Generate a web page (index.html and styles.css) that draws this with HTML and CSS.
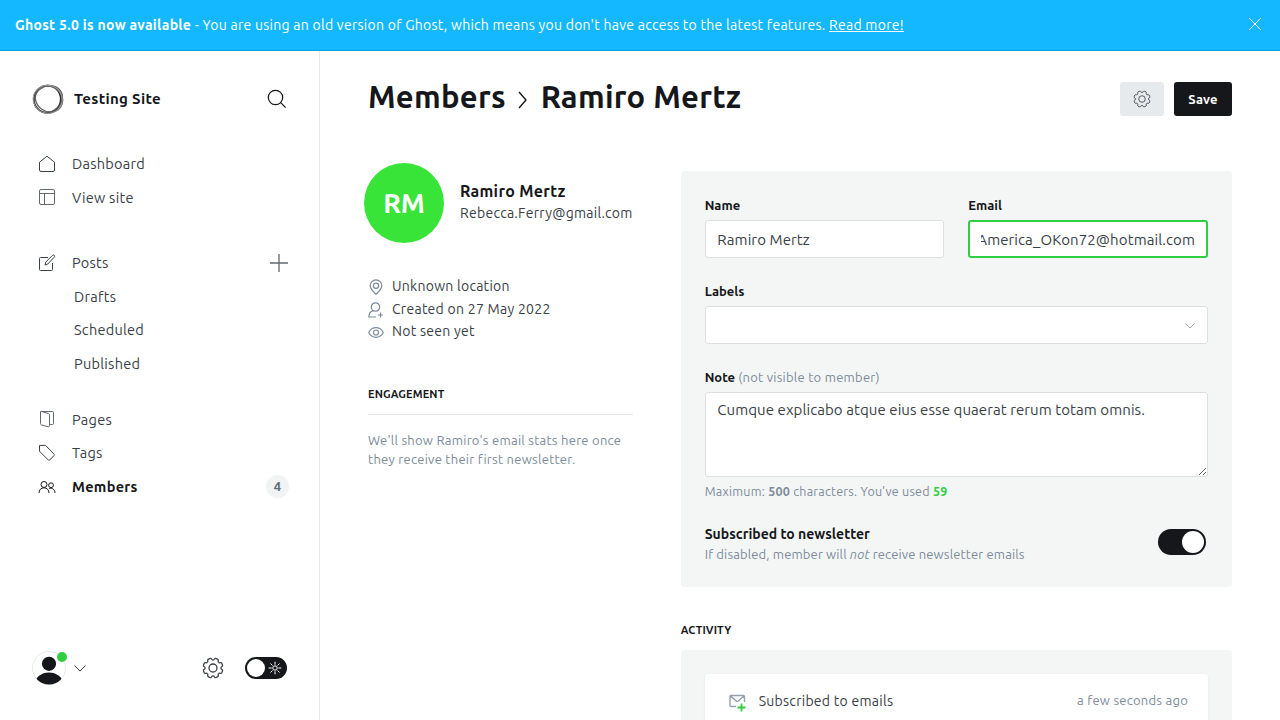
FILE: index.html
```html
<!DOCTYPE html>
<html lang="en">
<head>
<meta charset="utf-8">
<title>Ramiro Mertz - Members</title>
<link rel="stylesheet" href="styles.css">
</head>
<body>
<svg class="defs" aria-hidden="true">
  <defs>
    <path id="tooth" d="M-3.02-7.3C-2.2-7.6-2.1-8.4-2-9Q-1.8-9.8-1.1-9.9L1.1-9.9Q1.8-9.8 2-9C2.1-8.4 2.2-7.6 3.02-7.3"/>
    <symbol id="gear" viewBox="-11 -11 22 22">
      <use href="#tooth" transform="rotate(22.5)"/><use href="#tooth" transform="rotate(67.5)"/>
      <use href="#tooth" transform="rotate(112.5)"/><use href="#tooth" transform="rotate(157.5)"/>
      <use href="#tooth" transform="rotate(202.5)"/><use href="#tooth" transform="rotate(247.5)"/>
      <use href="#tooth" transform="rotate(292.5)"/><use href="#tooth" transform="rotate(337.5)"/>
      <circle r="4"/>
    </symbol>
  </defs>
</svg>

<header class="banner">
  <p class="banner-text"><b>Ghost 5.0 is now available</b> - You are using an old version of Ghost, which means you don't have access to the latest features. <a href="#">Read more!</a></p>
  <svg class="icon" width="12" height="12" viewBox="0 0 12 12"><path d="M0 0l12 12M12 0L0 12"/></svg>
</header>

<div class="app">
  <aside class="sidebar">
    <div class="site">
      <svg class="site-logo" width="32" height="32" viewBox="0 0 32 32">
        <path d="M15 1.500c8 0 15 5 15.800 11.500.8 7-4 14-11 15.500l3-2.500c5-3 7-9 5-14.500C26 7 21.500 3.800 15 3.600z" fill="#777" opacity=".75"/>
        <ellipse cx="15.300" cy="16.200" rx="13.400" ry="13.700" stroke="#333" stroke-width="1.700"/>
        <ellipse cx="16.800" cy="15.400" rx="14.200" ry="12.600" stroke="#666" stroke-width="1.300" transform="rotate(35 16 16)"/>
        <ellipse cx="16.200" cy="16.200" rx="14.800" ry="12.700" stroke="#555" stroke-width="1" transform="rotate(-35 16 16)"/>
        <ellipse cx="15.800" cy="16.400" rx="14.600" ry="14" stroke="#999" stroke-width="1" transform="rotate(15 16 16)"/>
      </svg>
      <span class="site-name">Testing Site</span>
      <svg class="icon search" width="20" height="20" viewBox="0 0 20 20"><circle cx="8.500" cy="8.500" r="7.200"/><path d="M13.700 13.700l5 5"/></svg>
    </div>

    <nav class="nav">
      <div class="group main-group">
        <a class="item"><svg class="icon" width="18" height="18" viewBox="0 0 18 18"><path d="M1.500 7.200L9 1.200l7.500 6V15a1.500 1.500 0 0 1-1.500 1.500H3A1.500 1.500 0 0 1 1.500 15z"/></svg><span>Dashboard</span></a>
        <a class="item"><svg class="icon soft lift" width="18" height="18" viewBox="0 0 18 18"><rect x="1.500" y="1.500" width="15" height="15" rx="1.500"/><path d="M1.500 5.500h15M6.500 5.500v11"/></svg><span>View site</span></a>
      </div>
      <div class="group posts-group">
        <a class="item"><svg class="icon" width="18" height="18" viewBox="0 0 18 18"><path d="M10 3.500H2.500a1 1 0 0 0-1 1v11a1 1 0 0 0 1 1h11a1 1 0 0 0 1-1V9M7 11l.8-3 6.600-6.600a1.200 1.200 0 0 1 1.800 1.800L9.800 10z"/></svg><span>Posts</span><svg class="icon plus" width="18" height="18" viewBox="0 0 18 18"><path d="M9 0v18M0 9h18"/></svg></a>
        <a class="item sub">Drafts</a>
        <a class="item sub">Scheduled</a>
        <a class="item sub">Published</a>
      </div>
      <div class="group">
        <a class="item"><svg class="icon soft lift" width="18" height="18" viewBox="0 0 18 18"><path d="M2.500 1.500h12a1 1 0 0 1 1 1v11a1 1 0 0 1-1 1h-2.300M2.500 1.500v12c0 .8.400 1.200 1 1.400l6.500 1.900c1 .2 1.500-.3 1.500-1V5c0-.8-.3-1.200-1-1.500l-7-2"/></svg><span>Pages</span></a>
        <a class="item"><svg class="icon" width="18" height="18" viewBox="0 0 18 18"><path d="M1.500 1.500l6-.2 8.700 9a.7.7 0 0 1 0 1l-4.700 4.900a.7.7 0 0 1-1 0L1.500 7.200z"/></svg><span>Tags</span></a>
        <a class="item active"><svg class="icon" width="18" height="18" viewBox="0 0 18 18"><circle cx="6" cy="6.500" r="3"/><circle cx="13" cy="7.200" r="2.400"/><path d="M1 15c0-3 2-5.200 5-5.200s5 2.200 5 5.200M11.200 10.700c3-1.300 5.600.8 5.800 4.300"/></svg><span>Members</span><span class="count">4</span></a>
      </div>
    </nav>

    <div class="user-bar">
      <div class="user-photo">
        <svg width="34" height="34" viewBox="0 0 34 34"><clipPath id="face"><circle cx="17" cy="17" r="16.500"/></clipPath><circle cx="17" cy="17" r="16.500" fill="#fff" stroke="#e6e9eb"/><g clip-path="url(#face)" fill="#15171a"><circle cx="17" cy="12.800" r="7.100"/><ellipse cx="17" cy="33" rx="14" ry="11.500"/></g></svg>
        <i class="status"></i>
      </div>
      <svg class="icon caret" width="12" height="7" viewBox="0 0 12 7"><path d="M.5.5L6 6 11.500.5"/></svg>
      <svg class="icon settings" width="22" height="22"><use href="#gear"/></svg>
      <div class="night">
        <i class="night-knob"></i>
        <svg width="14" height="14" viewBox="-7 -7 14 14"><circle r="2.200"/><path d="M0-6.300v3M0 6.300v-3M-6.300 0h3M6.300 0h-3M-4.500-4.500l2 2M4.500 4.500l-2-2M4.500-4.500l-2 2M-4.500 4.500l2-2"/></svg>
      </div>
    </div>
  </aside>

  <main class="main">
    <div class="page-head">
      <h1 class="crumbs"><span>Members</span><svg class="icon" width="10" height="18" viewBox="0 0 10 18"><path d="M1 1l7 8-7 8"/></svg><span>Ramiro Mertz</span></h1>
      <button class="btn btn-gear"><svg class="icon" width="18" height="18"><use href="#gear"/></svg></button>
      <button class="btn btn-save">Save</button>
    </div>

    <div class="columns">
      <section class="profile">
        <div class="person">
          <div class="initials">RM</div>
          <div class="person-text">
            <div class="person-name">Ramiro Mertz</div>
            <div class="person-mail">Rebecca.Ferry@gmail.com</div>
          </div>
        </div>
        <div class="facts">
          <div class="fact"><svg class="icon" width="16" height="16" viewBox="0 0 16 16"><path d="M8 15.200C4.500 12 2.200 9.500 2.200 6.700a5.800 5.800 0 0 1 11.600 0c0 2.800-2.300 5.300-5.800 8.500z"/><circle cx="8" cy="6.700" r="2.600"/></svg>Unknown location</div>
          <div class="fact"><svg class="icon" width="16" height="16" viewBox="0 0 16 16"><circle cx="7.500" cy="5" r="4.200"/><path d="M5.200 8.600C2.500 9.400.8 11 .8 15H8M12.500 10.500v5M10 13h5"/></svg>Created on 27 May 2022</div>
          <div class="fact"><svg class="icon" width="16" height="16" viewBox="0 0 16 16"><path d="M.7 8.500C2.300 5.500 5 3.700 8 3.700s5.700 1.800 7.300 4.800C13.700 11.500 11 13.300 8 13.300S2.300 11.500.7 8.500z"/><circle cx="8" cy="8.500" r="2.500"/></svg>Not seen yet</div>
        </div>
        <h2 class="caption ruled">ENGAGEMENT</h2>
        <p class="empty">We'll show Ramiro's email stats here once they receive their first newsletter.</p>
      </section>

      <section class="details">
        <div class="panel">
          <div class="pair">
            <div class="field"><label class="label">Name</label><div class="input">Ramiro Mertz</div></div>
            <div class="field"><label class="label">Email</label><div class="input focused"><div class="scrolled">America_OKon72@hotmail.com</div></div></div>
          </div>
          <div class="field"><label class="label">Labels</label><div class="input select"><svg class="icon" width="10" height="6" viewBox="0 0 10 6"><path d="M.5.500L5 5 9.500.500"/></svg></div></div>
          <div class="field"><label class="label">Note <span class="hint">(not visible to member)</span></label><textarea class="note">Cumque explicabo atque eius esse quaerat rerum totam omnis.</textarea>
            <p class="limit">Maximum: <b>500</b> characters. You’ve used <b class="used">59</b></p>
          </div>
          <div class="subscribe">
            <div class="subscribe-copy">
              <div class="subscribe-title">Subscribed to newsletter</div>
              <div class="subscribe-text">If disabled, member will <em>not</em> receive newsletter emails</div>
            </div>
            <div class="switch"><i class="switch-knob"></i></div>
          </div>
        </div>

        <h2 class="caption activity">ACTIVITY</h2>
        <div class="panel feed">
          <div class="event">
            <svg width="18" height="18" viewBox="0 0 18 18"><path d="M7 12.500H2a1 1 0 0 1-1-1v-9a1 1 0 0 1 1-1h12.500a1 1 0 0 1 1 1V8M1.500 2l6 5.200c.500.400 1 .400 1.500 0L15 2" class="mail"/><path d="M12.500 9.500v8M8.500 13.500h8" class="add"/></svg>
            <span class="event-name">Subscribed to emails</span>
            <span class="event-time">a few seconds ago</span>
          </div>
        </div>
      </section>
    </div>
  </main>
</div>
</body>
</html>
```
FILE: styles.css
```css
* { box-sizing: border-box; }

body {
  margin: 0;
  height: 720px;
  overflow: hidden;
  display: flex;
  flex-direction: column;
  background: #fff;
  color: #394047;
  font: 14px/20px Ubuntu, "Noto Sans", sans-serif;
  letter-spacing: 0.27px;
}

p, h1, h2 { margin: 0; }
svg { display: block; flex: none; }
.defs { position: absolute; width: 0; height: 0; }
.icon { fill: none; stroke: currentColor; stroke-width: 1; stroke-linejoin: round; overflow: visible; }

/* Update notice */
.banner {
  flex: none;
  height: 51px;
  display: flex;
  align-items: center;
  justify-content: space-between;
  padding: 0 19px 2px 15px;
  background: #14b8ff;
  border-bottom: 1px solid #0ba3e6;
  color: #fff;
}
.banner-text { padding-top: 1px; white-space: nowrap; }
.banner-text b { letter-spacing: 0.3px; }
.banner-text a { color: #fff; }

.app { flex: 1; min-height: 0; display: flex; }

/* Sidebar */
.sidebar {
  flex: none;
  width: 320px;
  display: flex;
  flex-direction: column;
  padding: 32px 31px 35px 32px;
  border-right: 1px solid #e5e9ed;
}
.site { display: flex; align-items: center; height: 32px; }
.site-logo { fill: none; }
.site-name { margin-left: 10px; color: #15171a; font-size: 15px; font-weight: 700; letter-spacing: 0.32px; }
.search { margin: 0 1px 0 auto; color: #15171a; stroke-width: 1.2; }

.nav { padding: 32.3px 0 0 6px; }
.item { display: flex; align-items: center; height: 33.5px; font-size: 14.5px; }
.item .icon { margin-right: 16px; }
.item .soft { color: #626970; }
.item .lift { transform: translateY(-1px); }
.sub { padding-left: 36px; }
.main-group { margin-bottom: 32px; }
.posts-group { margin-bottom: 22.7px; }
.item .plus { margin: 0 0 0 auto; color: #626970; stroke-width: 1.3; }
.active { color: #15171a; font-weight: 700; letter-spacing: 0.3px; }
.count {
  width: 23px;
  height: 23px;
  margin: 0 -1px 0 auto;
  border-radius: 50%;
  background: #f1f3f5;
  color: #626d79;
  font-size: 13px;
  font-weight: 600;
  line-height: 23px;
  text-align: center;
}

.user-bar { display: flex; align-items: center; height: 34px; margin-top: auto; }
.user-photo { position: relative; }
.status {
  position: absolute;
  top: 1px;
  right: -1px;
  width: 10px;
  height: 10px;
  border-radius: 50%;
  background: #30cf43;
}
.caret { margin-left: 8px; }
.settings { margin-left: auto; stroke-width: 1.3; }
.night {
  display: flex;
  align-items: center;
  justify-content: space-between;
  width: 42px;
  height: 22px;
  margin-left: 21px;
  margin-right: 1px;
  padding: 0 5px 0 2px;
  border-radius: 11px;
  background: #15171a;
}
.night-knob { width: 18px; height: 18px; border-radius: 50%; background: #fff; }
.night svg { fill: none; stroke: #fff; stroke-width: 1; }

/* Page header */
.main { flex: 1; min-width: 0; padding: 31px 48px 0; }
.page-head { display: flex; height: 34px; margin-bottom: 47px; }
.crumbs {
  display: flex;
  align-items: center;
  height: 30px;
  margin-right: auto;
  color: #15171a;
  font-size: 31px;
  line-height: 30px;
  font-weight: 700;
}
.crumbs .icon { margin: 6px 13px 0 12px; stroke-width: 1.4; }
.btn {
  display: flex;
  align-items: center;
  justify-content: center;
  height: 34px;
  padding: 0;
  border: 0;
  border-radius: 3px;
  font: inherit;
}
.btn-gear { width: 44px; background: #e6eaed; color: #394047; }
.btn-save { width: 58px; margin-left: 10px; background: #15171a; color: #fff; font-size: 13px; font-weight: 600; letter-spacing: 0.2px; }

.columns { display: grid; grid-template-columns: 265px 551.33px; justify-content: space-between; }

/* Profile column */
.person { display: flex; align-items: center; gap: 16px; margin-left: -4px; }
.initials {
  flex: none;
  width: 80px;
  height: 80px;
  border-radius: 50%;
  background: #37e437;
  color: #fff;
  font-size: 27px;
  font-weight: 600;
  letter-spacing: 0;
  line-height: 80px;
  text-align: center;
}
.person-text { padding-bottom: 2px; }
.person-name { color: #15171a; font-size: 16px; line-height: 22px; font-weight: 700; letter-spacing: 0.32px; }
.person-mail { line-height: 22px; }
.facts { margin-top: 31.8px; }
.fact { display: flex; align-items: center; gap: 8px; height: 22.5px; white-space: nowrap; }
.fact .icon { color: #7c8b9a; stroke-width: 1.2; transform: translateY(1px); }
.caption { color: #15171a; font-size: 11px; line-height: 16px; font-weight: 600; letter-spacing: 0.12px; }
.ruled { margin-top: 43.7px; padding-bottom: 12px; border-bottom: 1px solid #e5e9ed; }
.empty { margin-top: 16px; color: #7c8b9a; font-size: 13px; line-height: 19px; }

/* Member form */
.details { padding-top: 8px; }
.panel { padding: 24px; border-radius: 3px; background: #f4f6f6; }
.pair { display: grid; grid-template-columns: 1fr 1fr; gap: 24px; }
.field { min-width: 0; margin-bottom: 23px; }
.label { display: block; margin-bottom: 5px; color: #15171a; font-size: 13px; font-weight: 600; line-height: 20px; letter-spacing: 0; }
.hint { color: #7c8b9a; font-weight: 400; letter-spacing: 0.26px; }
.input {
  display: flex;
  align-items: center;
  height: 38px;
  padding: 1px 12px 0 11.7px;
  border: 1px solid #dddfe2;
  border-radius: 3px;
  background: #fff;
  font-size: 15px;
  letter-spacing: 0.1px;
}
.focused { border: 2px solid #30cf43; padding: 1px 11px 0 10.5px; }
.scrolled { flex: 1; min-width: 0; display: flex; justify-content: flex-end; overflow: hidden; }
.select { justify-content: flex-end; }
.select .icon { color: #9aa5af; }
.note {
  display: block;
  width: 100%;
  height: 85px;
  padding: 6px 12px 6px 11.7px;
  border: 1px solid #dddfe2;
  border-radius: 3px;
  outline: 0;
  background: #fff;
  color: #394047;
  font: 15px/21px Ubuntu, "Noto Sans", sans-serif;
  letter-spacing: 0.08px;
}
.limit { margin-top: 4px; color: #7c8b9a; font-size: 12.5px; line-height: 20px; letter-spacing: 0.25px; }
.limit .used { color: #30cf43; }
.subscribe { display: flex; align-items: center; justify-content: space-between; margin-top: -1px; padding-right: 2px; }
.subscribe-copy { margin: 1px 0 -1px; }
.subscribe-title { color: #15171a; line-height: 20px; font-weight: 600; letter-spacing: 0; }
.subscribe-text { color: #7c8b9a; font-size: 13px; line-height: 20px; letter-spacing: 0.14px; }
.switch { display: flex; justify-content: flex-end; width: 48px; height: 26px; margin-top: -2px; padding: 2px; border-radius: 13px; background: #15171a; }
.switch-knob { width: 22px; height: 22px; border-radius: 50%; background: #fff; }

/* Activity feed */
.activity { margin: 35px 0 12px; }
.event {
  display: flex;
  align-items: center;
  height: 54px;
  padding: 0 20px 0 24px;
  border-radius: 3px;
  background: #fff;
  box-shadow: 0 1px 3px rgba(0, 0, 0, 0.06);
}
.event svg { fill: none; stroke-width: 1.4; transform: translateY(2px); }
.mail { stroke: #95a1ad; }
.add { stroke: #30cf43; stroke-width: 1.8; }
.event-name { margin-left: 12px; }
.event-time { margin-left: auto; padding-bottom: 2px; color: #7c8b9a; font-size: 13px; letter-spacing: 0.25px; }
```
